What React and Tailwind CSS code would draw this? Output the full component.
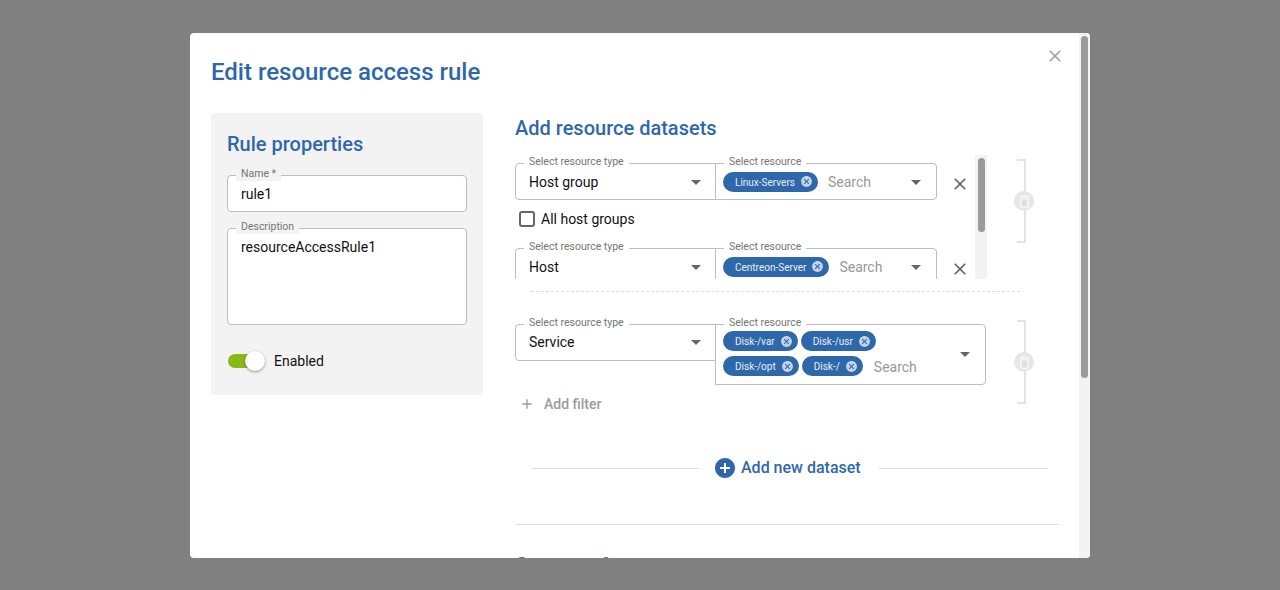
import React from 'react';

const paths = {
  close: 'M19 6.41 17.59 5 12 10.59 6.41 5 5 6.41 10.59 12 5 17.59 6.41 19 12 13.41 17.59 19 19 17.59 13.41 12z',
  cancel: 'M12 2C6.47 2 2 6.47 2 12s4.47 10 10 10 10-4.47 10-10S17.53 2 12 2zm5 13.59L15.59 17 12 13.41 8.41 17 7 15.59 10.59 12 7 8.41 8.41 7 12 10.59 15.59 7 17 8.41 13.41 12 17 15.59z',
  arrow: 'M7 10l5 5 5-5z',
  add: 'M19 13h-6v6h-2v-6H5v-2h6V5h2v6h6v2z',
  addCircle: 'M12 2C6.48 2 2 6.48 2 12s4.48 10 10 10 10-4.48 10-10S17.52 2 12 2zm5 11h-4v4h-2v-4H7v-2h4V7h2v4h4v2z',
  trash: 'M6 19c0 1.1.9 2 2 2h8c1.1 0 2-.9 2-2V7H6v12zM19 4h-3.5l-1-1h-5l-1 1H5v2h14V4z',
};

const Icon = ({ name, className }) => (
  <svg viewBox="0 0 24 24" fill="currentColor" className={className}>
    <path d={paths[name]} />
  </svg>
);

const Field = ({ label, className, labelClassName = 'bg-white', children }) => (
  <div className={`relative border border-[#bdbdbd] ${className}`}>
    <span className={`absolute left-2 -top-[9px] px-[5px] text-[10.5px] leading-[14px] text-[#757575] whitespace-nowrap ${labelClassName}`}>
      {label}
    </span>
    {children}
  </div>
);

const Chip = ({ label }) => (
  <span className="flex h-5 items-center rounded-full bg-[#2e68aa] pl-3 pr-[5px] text-[10px] text-[#e8eef6] whitespace-nowrap">
    <span className="mt-[3px]">{label}</span>
    <Icon name="cancel" className="ml-[5px] h-[13px] w-[13px] text-[#c3d3e6]" />
  </span>
);

const TypeSelect = ({ value, contentClassName = '' }) => (
  <Field label="Select resource type" className="h-[37px] w-[201px] shrink-0 rounded-l">
    <div className={`flex h-full items-center justify-between pl-[13px] pr-[7px] text-sm text-[#111] ${contentClassName}`}>
      {value}
      <Icon name="arrow" className="h-6 w-6 text-[#666]" />
    </div>
  </Field>
);

const ResourceSelect = ({ chip }) => (
  <Field label="Select resource" className="-ml-px h-[37px] w-[222px] shrink-0 rounded-r">
    <div className="flex h-full items-center pl-[7px] pr-[8px] text-sm">
      {chip}
      <span className="ml-[10px] text-[#999]">Search</span>
      <Icon name="arrow" className="ml-auto h-6 w-6 text-[#666]" />
    </div>
  </Field>
);

// bracket on the right of each dataset, with the delete button in the middle
const DatasetDelete = () => (
  <div className="relative h-[84px] w-[9px] border-y-2 border-r-2 border-[#e3e3e3]">
    <div className="absolute -right-[10px] top-[30px] flex h-5 w-5 items-center justify-center rounded-full bg-[#e6e6e6]">
      <svg viewBox="0 0 24 24" className="h-[17px] w-[17px]">
        <path fill="#f6f6f6" d={paths.trash} />
        <rect x="8.5" y="9" width="7" height="10" fill="#dedede" />
      </svg>
    </div>
  </div>
);

const RemoveRow = () => (
  <Icon name="close" className="ml-[13px] mt-[11px] h-5 w-5 shrink-0 text-[#666]" />
);

const App = () => {
  return (
    <div className="h-[590px] overflow-hidden bg-[#808080] pt-[33px] font-['Roboto',sans-serif]">
      <div className="relative mx-auto flex h-[525px] w-[900px] overflow-hidden rounded bg-white">
        <Icon name="close" className="absolute right-[25px] top-[13px] h-5 w-5 text-[#a3a3a3]" />

        <div className="min-w-0 flex-1 pl-[21px] pt-[24px]">
          <h1 className="text-2xl font-medium leading-[30px] text-[#2e68aa]">Edit resource access rule</h1>

          <div className="mt-[26px] flex">
            <aside className="h-[282px] w-[272px] shrink-0 rounded bg-[#f3f3f3] px-4 pt-[18px]">
              <h2 className="text-xl font-medium leading-[26px] text-[#2e68aa]">Rule properties</h2>
              <Field label="Name *" labelClassName="bg-[#f3f3f3]" className="mt-[18px] h-[37px] rounded bg-white">
                <div className="flex h-full items-center px-[13px] text-sm text-[#111]">rule1</div>
              </Field>
              <Field label="Description" labelClassName="bg-[#f3f3f3]" className="mt-4 h-[97px] rounded bg-white">
                <div className="px-[13px] pt-2 text-sm leading-[20px] text-[#111]">resourceAccessRule1</div>
              </Field>
              <div className="ml-px mt-[26px] flex items-center">
                <div className="relative h-[14px] w-[28px] rounded-full bg-[#88b917]">
                  <span className="absolute -right-[9px] -top-[3px] h-5 w-5 rounded-full bg-white shadow-[0_1px_3px_rgba(0,0,0,0.4)]" />
                </div>
                <span className="ml-[18px] text-sm text-[#111]">Enabled</span>
              </div>
            </aside>

            <section className="ml-8 w-[544px] shrink-0">
              <h2 className="text-xl font-medium leading-[30px] text-[#2e68aa]">Add resource datasets</h2>

              <div className="mt-[12px] flex items-start">
                <div className="relative h-[124px] w-[472px] shrink-0 overflow-hidden pt-2">
                  <div className="flex">
                    <TypeSelect value="Host group" />
                    <ResourceSelect chip={<Chip label="Linux-Servers" />} />
                    <RemoveRow />
                  </div>
                  <label className="ml-1 mt-[9px] flex h-[20px] items-center text-sm text-[#111]">
                    <span className="h-4 w-4 rounded-[3px] border-2 border-[#666]" />
                    <span className="ml-[6px]">All host groups</span>
                  </label>
                  <div className="mt-[19px] flex">
                    <TypeSelect value="Host" />
                    <ResourceSelect chip={<Chip label="Centreon-Server" />} />
                    <RemoveRow />
                  </div>
                  <div className="absolute right-0 top-0 h-full w-3 bg-[#f3f3f3]">
                    <div className="mx-auto mt-[3px] h-[74px] w-[7px] rounded-full bg-[#9a9a9a]" />
                  </div>
                </div>
                <div className="ml-[30px] mt-1">
                  <DatasetDelete />
                </div>
              </div>

              <div className="ml-4 mt-3 w-[489px] border-t border-dashed border-[#dcdcdc]" />

              <div className="mt-[28px] flex items-start">
                <div className="w-[502px] shrink-0 pt-[4px]">
                  <div className="flex items-start">
                    <TypeSelect value="Service" contentClassName="pb-[2px]" />
                    <Field label="Select resource" className="-ml-px h-[61px] w-[271px] shrink-0 rounded-r">
                      <div className="flex h-full items-center pl-[7px] pr-[8px] text-sm">
                        <div className="mb-px flex flex-col gap-1">
                          <div className="flex gap-[3px]">
                            <Chip label="Disk-/var" />
                            <Chip label="Disk-/usr" />
                          </div>
                          <div className="flex items-center gap-[3px]">
                            <Chip label="Disk-/opt" />
                            <Chip label="Disk-/" />
                            <span className="ml-[8px] mt-[2px] text-[#999]">Search</span>
                          </div>
                        </div>
                        <Icon name="arrow" className="mb-[2px] ml-auto h-6 w-6 text-[#666]" />
                      </div>
                    </Field>
                  </div>
                </div>
                <DatasetDelete />
              </div>

              <div className="-mt-[12px] flex h-6 items-center pl-[4px] text-sm font-medium text-[#9b9b9b]">
                <Icon name="add" className="h-4 w-4" />
                <span className="ml-[9px]">Add filter</span>
              </div>

              <div className="ml-4 mt-[40px] flex items-center">
                <div className="h-px w-[168px] bg-[#e0e0e0]" />
                <div className="ml-4 flex items-center text-base font-medium text-[#2e68aa]">
                  <svg viewBox="2 2 20 20" fill="currentColor" className="h-5 w-5">
                    <path d={paths.addCircle} />
                  </svg>
                  <span className="ml-[6px]">Add new dataset</span>
                </div>
                <div className="ml-[18px] h-px w-[169px] bg-[#e0e0e0]" />
              </div>

              <div className="mt-[44px] border-t border-[#e0e0e0]" />
              <h2 className="mt-[27px] text-xl font-medium leading-[26px] text-[#2e68aa]">Contacts &amp; contact groups</h2>
            </section>
          </div>
        </div>

        <div className="w-[11px] shrink-0 bg-[#f3f3f3] pt-[3px]">
          <div className="mx-auto h-[342px] w-[7px] rounded-full bg-[#9a9a9a]" />
        </div>
      </div>
    </div>
  );
};

export default App;
